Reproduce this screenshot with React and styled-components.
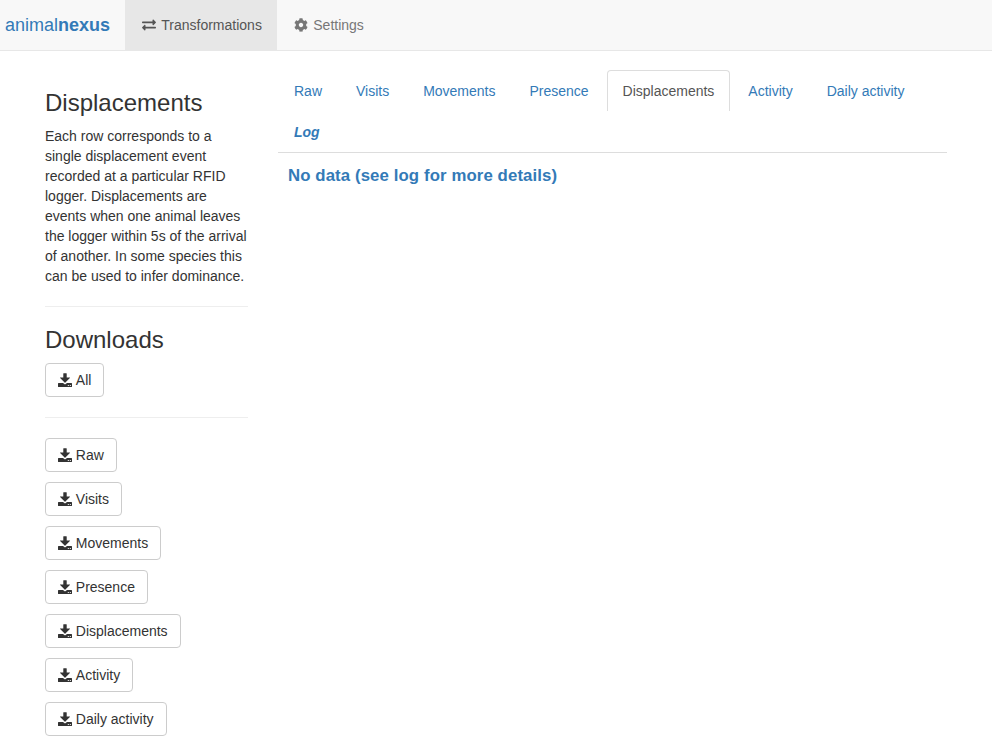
import React from "react";
import styled, { createGlobalStyle } from "styled-components";
import { FaCog, FaExchangeAlt } from "react-icons/fa";

const GlobalStyle = createGlobalStyle`
  *, *::before, *::after { box-sizing: border-box; }
  body {
    margin: 0;
    font-family: "Liberation Sans", Arial, sans-serif;
    font-size: 14px;
    line-height: 20px;
    color: #333;
    background: #fff;
  }
`;

const Navbar = styled.nav`
  display: flex;
  height: 51px;
  background: #f8f8f8;
  border-bottom: 1px solid #e7e7e7;
`;

const Brand = styled.a`
  padding: 15px 14.8px 15px 5px;
  font-size: 18px;
  color: #337ab7;
`;

const NavItem = styled.a`
  display: flex;
  align-items: center;
  height: 50px;
  padding: 0 15px;
  color: ${(p) => (p.$active ? "#555" : "#777")};
  background: ${(p) => (p.$active ? "#e7e7e7" : "transparent")};
`;

const NavIcon = styled.span`
  display: flex;
  justify-content: center;
  width: 17.5px;
  margin-right: 3.9px;
`;

const Layout = styled.div`
  display: flex;
  padding: 19px 45px 0;
`;

const Sidebar = styled.aside`
  width: 203px;
  flex: none;
  margin-right: 30px;
`;

const Heading = styled.h3`
  margin: 20px 0 10px;
  font-size: 24px;
  font-weight: 500;
  line-height: 26px;
`;

const Description = styled.p`
  margin: 0;
`;

const Rule = styled.hr`
  margin: 20px 0;
  border: 0;
  border-top: 1px solid #eee;
`;

const DownloadList = styled.div`
  display: flex;
  flex-direction: column;
  align-items: flex-start;
  gap: 10px;
`;

const Button = styled.button`
  display: flex;
  align-items: center;
  gap: 3.8px;
  height: 34px;
  padding: 0 12px;
  font: inherit;
  color: #333;
  background: #fff;
  border: 1px solid #ccc;
  border-radius: 4px;
`;

const Main = styled.main`
  width: 669px;
  flex: none;
`;

const Tabs = styled.div`
  display: flex;
  flex-wrap: wrap;
  border-bottom: 1px solid #ddd;
`;

const Tab = styled.a`
  height: 41px;
  margin-right: 1.96px;
  padding: 10px 15px;
  color: ${(p) => (p.$active ? "#555" : "#337ab7")};
  border: 1px solid ${(p) => (p.$active ? "#ddd" : "transparent")};
  border-bottom: 0;
  border-radius: 4px 4px 0 0;
  font-weight: ${(p) => (p.$log ? "bold" : "normal")};
  font-style: ${(p) => (p.$log ? "italic" : "normal")};
`;

const Message = styled.div`
  padding: 13px 10px;
  font-size: 16.8px;
  letter-spacing: 0.1px;
  font-weight: bold;
  color: #337ab7;
`;

const DownloadIcon = () => (
  <svg width="14" height="14" viewBox="0 0 14 14" fill="currentColor">
    <path d="M5.3 0.6q0-.4.4-.4h2.6q.4 0 .4.4v4h3q.6 0 .2.5L7.4 9.5q-.4.4-.8 0L2.1 5.1q-.4-.5.2-.5h3z" />
    <path
      fillRule="evenodd"
      d="M.6 10H5.1L6.2 11q.8.7 1.6 0L8.9 10h4.5q.6 0 .6.6v2.8q0 .6-.6.6H.6q-.6 0-.6-.6v-2.8q0-.6.6-.6zM9.8 12v1h1v-1zM11.8 12v1h1v-1z"
    />
  </svg>
);

const Download = ({ children }) => (
  <Button>
    <DownloadIcon />
    {children}
  </Button>
);

const tabs = ["Raw", "Visits", "Movements", "Presence", "Displacements", "Activity", "Daily activity", "Log"];

export default function App() {
  return (
    <>
      <GlobalStyle />
      <Navbar>
        <Brand>animal<b>nexus</b></Brand>
        <NavItem $active>
          <NavIcon><FaExchangeAlt size={14} /></NavIcon>
          Transformations
        </NavItem>
        <NavItem>
          <NavIcon><FaCog size={14} /></NavIcon>
          Settings
        </NavItem>
      </Navbar>
      <Layout>
        <Sidebar>
          <Heading>Displacements</Heading>
          <Description>
            Each row corresponds to a single displacement event recorded at a
            particular RFID logger. Displacements are events when one animal
            leaves the logger within 5s of the arrival of another. In some
            species this can be used to infer dominance.
          </Description>
          <Rule />
          <Heading>Downloads</Heading>
          <Download>All</Download>
          <Rule />
          <DownloadList>
            {tabs.slice(0, 7).map((t) => <Download key={t}>{t}</Download>)}
          </DownloadList>
        </Sidebar>
        <Main>
          <Tabs>
            {tabs.map((t) => (
              <Tab key={t} $active={t === "Displacements"} $log={t === "Log"}>{t}</Tab>
            ))}
          </Tabs>
          <Message>No data (see log for more details)</Message>
        </Main>
      </Layout>
    </>
  );
}
